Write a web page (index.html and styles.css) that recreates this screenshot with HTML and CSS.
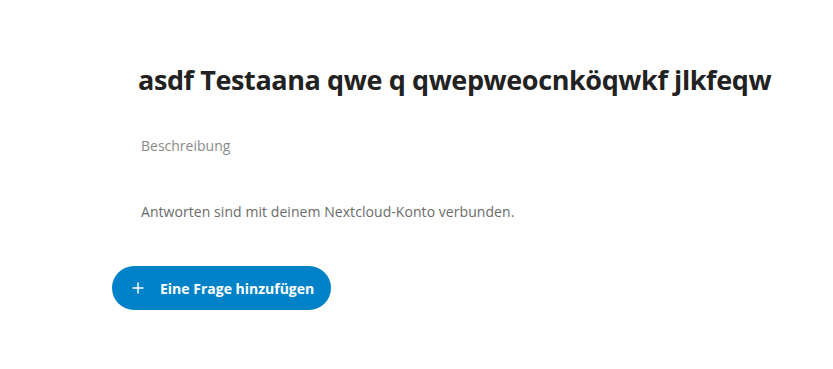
FILE: index.html
```html
<!DOCTYPE html>
<html lang="de">
<head>
<meta charset="utf-8">
<link rel="stylesheet" href="styles.css">
</head>
<body>
<main class="page">
  <header class="form-head">
    <h2 class="title">asdf Testaana qwe q qwepweocnköqwkf jlkfeqw</h2>
    <p class="desc">Beschreibung</p>
    <p class="info">Antworten sind mit deinem Nextcloud-Konto verbunden.</p>
  </header>
  <button class="add-btn" type="button">
    <svg class="plus" width="16" height="16" viewBox="0 0 16 16"><path d="M8 2.5v11M2.5 8h11" stroke="#fff" stroke-width="1.5"/></svg>
    <span>Eine Frage hinzufügen</span>
  </button>
</main>
</body>
</html>
```
FILE: styles.css
```css
html, body { margin: 0; padding: 0; background: #fff; }
body { font-family: "Open Sans", "Noto Sans", sans-serif; color: #222; }
.page { padding: 62px 0 0 112px; display: flex; flex-direction: column; align-items: flex-start; }
.form-head { padding-left: 26px; }
.title { margin: 0; font-size: 27px; font-weight: 700; line-height: 36px; letter-spacing: -0.4px; color: #222; }
.desc { margin: 38px 0 0 3px; font-size: 14px; line-height: 20px; color: #8a8a8a; }
.info { margin: 46px 0 0 3px; font-size: 14px; line-height: 20px; letter-spacing: 0.06px; color: #6b6b6b; }
.add-btn { margin-top: 44px; height: 44px; border: none; border-radius: 22px; background: #0082c9; color: #fff; display: flex; align-items: center; gap: 14px; padding: 0 17px 0 18px; font-family: inherit; font-size: 14px; font-weight: 700; }
.plus { display: block; }
```
